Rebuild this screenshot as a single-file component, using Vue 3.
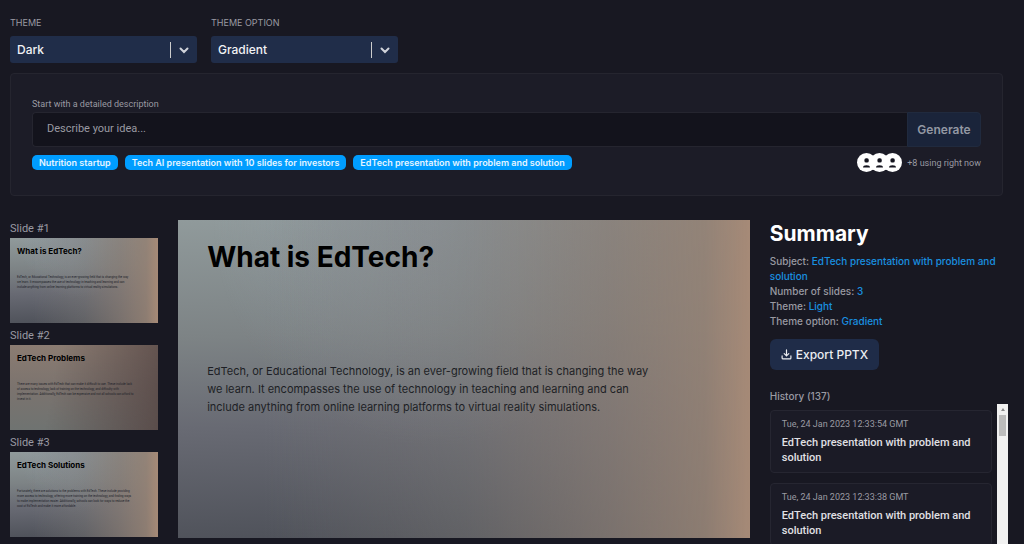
<script setup>
import { computed, ref } from "vue";

const theme = ref("Dark");
const themeOption = ref("Gradient");
const idea = ref("");
const selected = ref(0);

const examples = [
  "Nutrition startup",
  "Tech AI presentation with 10 slides for investors",
  "EdTech presentation with problem and solution",
];

const slides = [
  {
    title: "What is EdTech?",
    background: "cool",
    lines: [
      "EdTech, or Educational Technology, is an ever-growing field that is changing the way",
      "we learn. It encompasses the use of technology in teaching and learning and can",
      "include anything from online learning platforms to virtual reality simulations.",
    ],
  },
  {
    title: "EdTech Problems",
    background: "warm",
    lines: [
      "There are many issues with EdTech that can make it difficult to use. These include lack",
      "of access to technology, lack of training on the technology, and difficulty with",
      "implementation. Additionally, EdTech can be expensive and not all schools can afford to",
      "invest in it.",
    ],
  },
  {
    title: "EdTech Solutions",
    background: "cool",
    lines: [
      "Fortunately, there are solutions to the problems with EdTech. These include providing",
      "more access to technology, offering more training on the technology, and finding ways",
      "to make implementation easier. Additionally, schools can look for ways to reduce the",
      "cost of EdTech and make it more affordable.",
    ],
  },
];

const summary = [
  { label: "Subject", value: "EdTech presentation with problem and solution" },
  { label: "Number of slides", value: "3" },
  { label: "Theme", value: "Light" },
  { label: "Theme option", value: "Gradient" },
];

const history = [
  { date: "Tue, 24 Jan 2023 12:33:54 GMT", subject: "EdTech presentation with problem and solution" },
  { date: "Tue, 24 Jan 2023 12:33:38 GMT", subject: "EdTech presentation with problem and solution" },
];

const current = computed(() => slides[selected.value]);
</script>

<template>
  <main class="page">
    <div class="filters">
      <div class="field">
        <label for="theme">THEME</label>
        <div class="select">
          <select id="theme" v-model="theme">
            <option>Dark</option>
            <option>Light</option>
          </select>
          <span class="divider"></span>
          <svg class="chevron" viewBox="0 0 12 12"><path d="M2.500 4.500 6 8l3.500-3.500" /></svg>
        </div>
      </div>
      <div class="field">
        <label for="theme-option">THEME OPTION</label>
        <div class="select">
          <select id="theme-option" v-model="themeOption">
            <option>Gradient</option>
            <option>Solid</option>
          </select>
          <span class="divider"></span>
          <svg class="chevron" viewBox="0 0 12 12"><path d="M2.500 4.500 6 8l3.500-3.500" /></svg>
        </div>
      </div>
    </div>

    <section class="panel">
      <label class="hint" for="idea">Start with a detailed description</label>
      <form class="prompt" @submit.prevent>
        <input id="idea" v-model="idea" type="text" placeholder="Describe your idea..." />
        <button type="submit">Generate</button>
      </form>
      <div class="under">
        <div class="tags">
          <button v-for="example in examples" :key="example" type="button" @click="idea = example">
            {{ example }}
          </button>
        </div>
        <div class="online">
          <div class="avatars">
            <svg v-for="n in 3" :key="n" viewBox="0 0 20 20">
              <circle cx="10" cy="10" r="10" fill="#fff" />
              <rect x="7.800" y="5.500" width="4.600" height="4.600" rx="1.800" fill="#15151f" />
              <path d="M6.300 15.200c0-1.500 1.400-2.200 3.700-2.200s3.700.7 3.700 2.200z" fill="#15151f" />
            </svg>
          </div>
          <span>+8 using right now</span>
        </div>
      </div>
    </section>

    <div class="content">
      <nav class="thumbs">
        <div v-for="(slide, index) in slides" :key="slide.title" class="thumb">
          <span class="thumb-label">Slide #{{ index + 1 }}</span>
          <button type="button" class="slide small" :class="slide.background" @click="selected = index">
            <span class="slide-title">{{ slide.title }}</span>
            <span class="slide-text">
              <span v-for="line in slide.lines" :key="line">{{ line }}</span>
            </span>
          </button>
        </div>
      </nav>

      <article class="slide large" :class="current.background">
        <h1 class="slide-title">{{ current.title }}</h1>
        <p class="slide-text">
          <span v-for="line in current.lines" :key="line">{{ line }}</span>
        </p>
      </article>

      <aside>
        <h2>Summary</h2>
        <ul class="summary">
          <li v-for="item in summary" :key="item.label">
            {{ item.label }}: <strong>{{ item.value }}</strong>
          </li>
        </ul>
        <button type="button" class="export">
          <svg viewBox="0 0 12 12">
            <path d="M6 1v6.500M3.500 5 6 7.500 8.500 5M1.200 7.500v2.300a1 1 0 0 0 1 1h7.600a1 1 0 0 0 1-1V7.500" />
          </svg>
          Export PPTX
        </button>
        <h3>History (137)</h3>
        <div class="history">
          <ul>
            <li v-for="item in history" :key="item.date">
              <time>{{ item.date }}</time>
              <p>{{ item.subject }}</p>
            </li>
          </ul>
          <div class="scrollbar">
            <span class="arrow"></span>
            <span class="handle"></span>
          </div>
        </div>
      </aside>
    </div>
  </main>
</template>

<style>
body {
  margin: 0;
  background: #181822;
}
</style>

<style scoped>
* {
  box-sizing: border-box;
}

.page {
  height: 100vh;
  overflow: hidden;
  padding: 17px 16px 0 10px;
  background: #181822;
  color: #9a9aa2;
  font-family: Inter, "Liberation Sans", sans-serif;
  font-size: 10px;
}

button,
input,
select {
  border: 0;
  margin: 0;
  font-family: inherit;
}

button {
  cursor: pointer;
}

h1,
h2,
h3,
p,
ul {
  margin: 0;
  padding: 0;
}

ul {
  list-style: none;
}

.filters {
  display: flex;
  gap: 14px;
}

.field {
  width: 187px;
}

.field label {
  display: block;
  margin-bottom: 7px;
  font-size: 9px;
  line-height: 12px;
}

.select {
  display: grid;
  grid-template-columns: 1fr 1px 26px;
  align-items: center;
  height: 27px;
  border-radius: 3px;
  background: #202d49;
}

.select select {
  grid-area: 1 / 1 / 2 / 4;
  width: 100%;
  height: 27px;
  padding: 0 7px;
  appearance: none;
  background: transparent;
  color: #f1f2f5;
  font-size: 12px;
  font-weight: 500;
}

.divider {
  grid-area: 1 / 2;
  height: 16px;
  background: #ccc;
  pointer-events: none;
}

.chevron {
  grid-area: 1 / 3;
  justify-self: center;
  width: 12px;
  height: 12px;
  fill: none;
  stroke: #d0d3da;
  stroke-width: 2;
  stroke-linecap: round;
  pointer-events: none;
}

.panel {
  margin: 10px 5px 24px 0;
  padding: 24px 21px 23px;
  border: 1px solid #25252f;
  border-radius: 4px;
  background: #1c1c27;
}

.hint,
.prompt input,
.online,
.thumb-label,
.history {
  font-family: Roboto, "Liberation Sans", sans-serif;
}

.hint {
  display: block;
  margin-bottom: 2px;
  font-size: 9px;
  line-height: 12px;
}

.prompt {
  display: flex;
  height: 35px;
}

.prompt input {
  flex: 1;
  padding: 0 14px 2px;
  border: 1px solid #25252f;
  border-right: 0;
  border-radius: 4px 0 0 4px;
  background: #13131c;
  color: #f1f2f5;
  font-size: 11px;
}

.prompt input::placeholder {
  color: #9a9aa2;
}

.prompt button {
  width: 74px;
  padding: 0 0 1px;
  border: 1px solid #202a3e;
  border-radius: 0 4px 4px 0;
  background: #1a243a;
  color: #9398a3;
  font-size: 12px;
  font-weight: 600;
}

.under {
  display: flex;
  justify-content: space-between;
  align-items: center;
  margin-top: 6px;
}

.tags {
  display: flex;
  gap: 7px;
}

.tags button {
  height: 15px;
  padding: 0 7px;
  border-radius: 5px;
  background: #009dff;
  color: #e4f4ff;
  font-size: 9px;
  font-weight: 600;
  line-height: 15px;
}

.online {
  display: flex;
  align-items: center;
  gap: 5px;
  font-size: 9px;
}

.avatars {
  display: flex;
}

.avatars svg {
  width: 19px;
  height: 19px;
}

.avatars svg + svg {
  margin-left: -6px;
}

.content {
  display: grid;
  grid-template-columns: 148fr 571fr 238fr;
  gap: 20px;
  align-items: start;
}

.thumbs,
aside {
  padding-top: 1px;
}

.thumbs {
  display: grid;
  gap: 5px;
}

.thumb-label {
  display: block;
  margin-bottom: 1px;
  font-size: 11px;
  line-height: 16px;
}

.slide {
  display: block;
  color: #000;
  text-align: left;
}

.slide-title {
  display: block;
  font-weight: 700;
}

.slide-text span {
  display: block;
  white-space: nowrap;
}

.cool {
  background:
    linear-gradient(
      90deg,
      rgba(125, 122, 119, 0) 15%,
      rgba(125, 122, 119, 0.4) 50%,
      rgba(136, 124, 116, 0.75) 75%,
      rgba(147, 129, 116, 0.9) 92%,
      #a68a77 100%
    ),
    radial-gradient(ellipse at 45% 0%, rgba(143, 152, 162, 0.6), transparent 50%),
    linear-gradient(178deg, #909a9b 0%, #7d8385 35%, #686a73 62%, #4c4f57 100%);
}

.warm {
  background:
    linear-gradient(100deg, transparent 30%, rgba(86, 70, 68, 0.85) 100%),
    linear-gradient(180deg, #8b7c72 0%, #7b736e 50%, #6f7371 100%);
}

.small {
  display: flex;
  flex-direction: column;
  justify-content: flex-start;
  align-items: flex-start;
  width: 100%;
  aspect-ratio: 148 / 85;
  padding: 8px 7px;
}

.small .slide-title {
  font-size: 8px;
  line-height: 10px;
}

.small .slide-text {
  display: block;
  padding-top: 19px;
  color: #22232a;
  font-family: Roboto, "Liberation Sans", sans-serif;
  font-size: 3px;
  line-height: 5px;
}

.large {
  aspect-ratio: 571 / 318;
  padding: 18px 29px;
}

.large .slide-title {
  font-size: 28px;
  line-height: 38px;
}

.large .slide-text {
  margin-top: 86px;
  color: #1d1f25;
  font-size: 11px;
  line-height: 18px;
}

h2 {
  color: #fff;
  font-size: 21px;
  font-weight: 700;
  line-height: 26px;
}

.summary {
  margin: 7px 0 10px;
  font-size: 10px;
  font-weight: 500;
  line-height: 15px;
}

.summary strong {
  color: #1890e0;
  font-weight: 500;
}

.export {
  display: flex;
  align-items: center;
  gap: 4px;
  height: 31px;
  padding: 0 11px;
  border-radius: 6px;
  background: #1f2c48;
  color: #eceef2;
  font-size: 12px;
  font-weight: 500;
}

.export svg {
  width: 11px;
  height: 11px;
  fill: none;
  stroke: currentColor;
  stroke-width: 1.300;
  stroke-linecap: round;
  stroke-linejoin: round;
}

h3 {
  margin-top: 19px;
  font-size: 10px;
  font-weight: 500;
  line-height: 15px;
}

.history {
  display: flex;
  gap: 5px;
}

.history ul {
  display: grid;
  flex: 1;
  align-content: start;
  gap: 10px;
  padding-top: 6px;
}

.history li {
  padding: 7px 11px;
  border: 1px solid #262631;
  border-radius: 4px;
  background: #1b1b26;
}

.history time {
  display: block;
  margin-bottom: 4px;
  font-size: 9px;
  line-height: 13px;
}

.history p {
  color: #e0e0e4;
  font-size: 11px;
  font-weight: 500;
  line-height: 15px;
}

.scrollbar {
  display: flex;
  flex-direction: column;
  align-items: center;
  gap: 4px;
  width: 11px;
  padding-top: 4px;
  background: #f1f1f1;
}

.arrow {
  border: 2px solid transparent;
  border-top: 0;
  border-bottom: 3px solid #8a8a8a;
}

.handle {
  width: 7px;
  height: 21px;
  background: #bcbcbc;
}
</style>
